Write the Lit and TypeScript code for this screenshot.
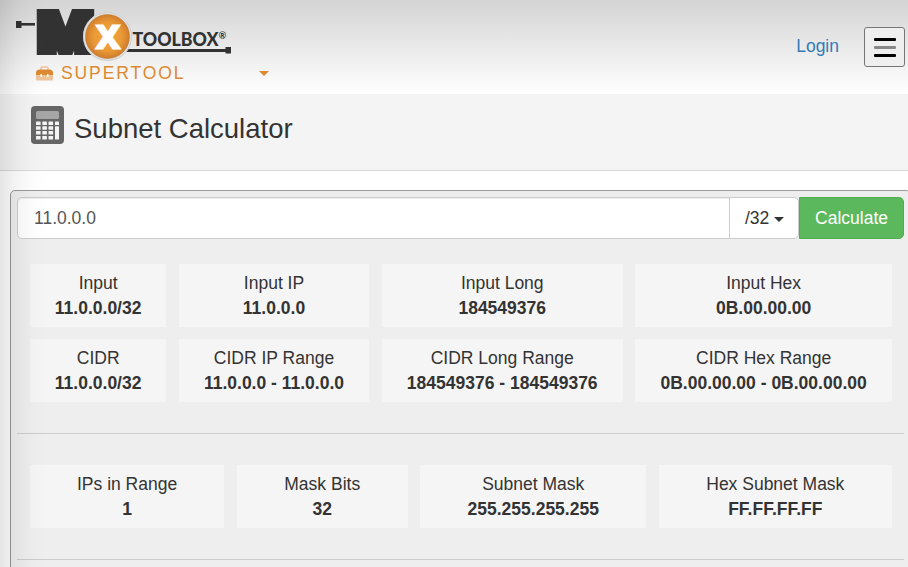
import { LitElement, html, css, svg } from "lit";
import { customElement, property } from "lit/decorators.js";

interface Fact {
  label: string;
  value: string;
}

@customElement("mx-logo")
class MxLogo extends LitElement {
  static styles = css`
    :host { display: block; width: 220px; height: 57px; }
    svg { display: block; overflow: visible; }
    .m { font: 900 54px Roboto, sans-serif; fill: #323232; stroke: #323232; stroke-width: 8px; }
    .x { font: 800 33px "Open Sans", sans-serif; fill: #fff; stroke: #fff; stroke-width: 0.8px; }
    .word { font: 900 18.5px Lato, sans-serif; fill: #323232; }
    .reg { font: 700 9px Lato, sans-serif; fill: #323232; }
  `;
  render() {
    return html`<svg width="220" height="57" viewBox="0 0 220 57">
      ${svg`
        <defs>
          <radialGradient id="disc">
            <stop offset="0" stop-color="#f5a83e" />
            <stop offset="0.65" stop-color="#ea9936" />
            <stop offset="1" stop-color="#cf7e2c" />
          </radialGradient>
        </defs>
        <rect x="0" y="17" width="5.500" height="7" fill="#323232" />
        <rect x="5" y="19" width="14" height="2.600" fill="#323232" />
        <text class="m" x="22" y="46.500" textLength="55" lengthAdjust="spacingAndGlyphs">M</text>
        <rect x="108" y="45" width="102" height="3" fill="#323232" />
        <rect x="209.500" y="43" width="5.500" height="6.500" fill="#323232" />
        <circle cx="91.500" cy="32.500" r="24.500" fill="#e3e3e3" />
        <circle cx="91.500" cy="32.500" r="24" fill="none" stroke="#c4c4c4" stroke-width="0.7" />
        <circle cx="91.500" cy="32.500" r="22" fill="url(#disc)" stroke="#bd7531" stroke-width="0.6" />
        <text class="x" x="79" y="44.500" textLength="26" lengthAdjust="spacingAndGlyphs">X</text>
        <text class="word" x="116.500" y="41.500" textLength="86" lengthAdjust="spacingAndGlyphs">TOOLBOX</text>
        <text class="reg" x="202.800" y="35">®</text>
      `}
    </svg>`;
  }
}

@customElement("site-header")
class SiteHeader extends LitElement {
  static styles = css`
    :host {
      display: flex;
      justify-content: space-between;
      box-sizing: border-box;
      height: 94px;
      padding: 4px 3px 0 16px;
      background: linear-gradient(#d4d4d4, #fff);
    }
    .tool { display: flex; align-items: center; height: 25px; margin: 0 0 0 20px; color: #dc8a31; }
    .tool-name { margin-left: 8px; font-size: 17.5px; letter-spacing: 1.9px; line-height: 25px; width: 198px; }
    .caret { border: 5px solid transparent; border-top-color: #dc8a31; border-bottom: 0; }
    .actions { display: flex; align-items: flex-start; padding-top: 23px; }
    .login { margin: 7px 25px 0 0; color: #337ab7; font-size: 17.5px; line-height: 25px; text-decoration: none; }
    .menu {
      display: flex; flex-direction: column; gap: 5px; align-items: center; justify-content: center;
      box-sizing: border-box; width: 41px; height: 40px; padding: 0;
      border: 1px solid #767676; border-radius: 3px; background: #efefef;
    }
    .bar { width: 22px; height: 3px; border-radius: 1px; background: #000; }
    .bar.mid { background: #888; }
  `;
  render() {
    return html`
      <div>
        <mx-logo></mx-logo>
        <div class="tool">
          <svg width="17" height="15" viewBox="0 0 17 15">
            <path d="M5 4V2q0-1 1-1h5q1 0 1 1v2" fill="none" stroke="#ecc39b" stroke-width="1.500" />
            <path d="M0 9.500V7q0-3.500 3.500-3.500h10Q17 3.500 17 7v2.500z" fill="#dc8a31" />
            <path d="M0 9.500h17v4q0 1-1 1H1q-1 0-1-1z" fill="#ecc39b" />
            <path d="M4.500 8h1.500v3H4.500zM11 8h1.500v3H11z" fill="#fff" />
          </svg>
          <span class="tool-name">SUPERTOOL</span>
          <span class="caret"></span>
        </div>
      </div>
      <div class="actions">
        <a class="login">Login</a>
        <button class="menu" aria-label="Menu">
          <span class="bar"></span><span class="bar mid"></span><span class="bar"></span>
        </button>
      </div>
    `;
  }
}

@customElement("fact-row")
class FactRow extends LitElement {
  @property({ attribute: false }) facts: Fact[] = [];
  @property({ attribute: false }) widths: number[] = [];
  static styles = css`
    :host { display: block; }
    .row { display: grid; gap: 12.5px; }
    .tile { box-sizing: border-box; height: 63px; padding-top: 6.5px; background: #f5f5f5; text-align: center; line-height: 25px; }
    .value { font-weight: 700; }
  `;
  render() {
    const columns = this.widths.map((w) => `${w}px`).join(" ");
    return html`<div class="row" style="grid-template-columns:${columns}">
      ${this.facts.map(
        (f) => html`<div class="tile"><div>${f.label}</div><div class="value">${f.value}</div></div>`
      )}
    </div>`;
  }
}

@customElement("app-root")
class AppRoot extends LitElement {
  static styles = css`
    :host {
      display: block; position: relative; box-sizing: border-box; height: 567px; overflow: hidden;
      background: #fff; color: #333; font: 17.5px "Liberation Sans", Arial, sans-serif;
    }
    .edge {
      position: absolute; inset: 0 auto 0 0; width: 46px; pointer-events: none;
      background: linear-gradient(90deg, rgba(0, 0, 0, 0.1), rgba(0, 0, 0, 0.045) 35%, rgba(0, 0, 0, 0.01) 70%, transparent);
    }
    .title {
      display: flex; box-sizing: border-box; height: 77px; padding: 12px 0 0 31px; gap: 10px;
      background: #f4f4f4; border-bottom: 1px solid #d9d9d9;
    }
    h1 { margin: 5px 0 0; font-size: 27.5px; line-height: 36px; font-weight: 400; }
    .panel {
      box-sizing: border-box; width: 901px; height: 420px; margin: 19px 0 0 10px; padding: 6px;
      border: 1px solid #999; border-radius: 5px; background: #eee;
    }
    .form { display: flex; height: 42px; width: 887px; }
    .form > * { box-sizing: border-box; line-height: 25px; font-family: inherit; font-size: 17.5px; }
    .address {
      width: 713px; padding: 0 16px; border: 1px solid #ccc; border-radius: 5px 0 0 5px;
      color: #555; background: #fff; box-shadow: inset 0 1px 1px rgba(0, 0, 0, 0.075); outline: 0;
    }
    .mask {
      display: flex; align-items: center; gap: 5px; width: 70px; margin-left: -1px; padding: 0 0 0 15px;
      border: 1px solid #ccc; border-radius: 0 5px 5px 0; background: #fff; color: #333;
    }
    .caret { margin-top: 2px; border: 5px solid transparent; border-top-color: #333; border-bottom: 0; }
    .go { width: 105px; padding: 0; border: 1px solid #4cae4c; border-radius: 0 5px 5px 0; background: #5cb85c; color: #fff; }
    .group { display: flex; flex-direction: column; gap: 12px; padding-left: 13px; }
    .group.first { margin-top: 25px; }
    .rule { height: 1px; width: 887px; margin: 31px 0; background: #ccc; }
  `;
  render() {
    const wide = [136.3, 190.4, 241.1, 256.7];
    return html`
      <site-header></site-header>
      <section class="title">
        <svg width="33" height="38" viewBox="0 0 33 38">
          <rect width="33" height="38" rx="4" fill="#666" />
          <rect x="5" y="5" width="23" height="8" rx="1.500" fill="#a6a6a6" />
          <g fill="#f4f4f4">
            ${[15.5, 20.3, 25.1, 29.9].map((y) =>
              [5, 11.3, 17.5].map((x) => svg`<rect x=${x} y=${y} width="4.600" height="3.500" rx="0.500" />`)
            )}
            <rect x="24" y="15.500" width="4" height="3.500" rx="0.500" />
            <rect x="24" y="20.300" width="4" height="13.100" rx="0.500" />
          </g>
        </svg>
        <h1>Subnet Calculator</h1>
      </section>
      <section class="panel">
        <div class="form">
          <input class="address" .value=${"11.0.0.0"} />
          <button class="mask">/32 <span class="caret"></span></button>
          <button class="go">Calculate</button>
        </div>
        <div class="group first">
          <fact-row .widths=${wide} .facts=${[
            { label: "Input", value: "11.0.0.0/32" },
            { label: "Input IP", value: "11.0.0.0" },
            { label: "Input Long", value: "184549376" },
            { label: "Input Hex", value: "0B.00.00.00" },
          ]}></fact-row>
          <fact-row .widths=${wide} .facts=${[
            { label: "CIDR", value: "11.0.0.0/32" },
            { label: "CIDR IP Range", value: "11.0.0.0 - 11.0.0.0" },
            { label: "CIDR Long Range", value: "184549376 - 184549376" },
            { label: "CIDR Hex Range", value: "0B.00.00.00 - 0B.00.00.00" },
          ]}></fact-row>
        </div>
        <div class="rule"></div>
        <div class="group">
          <fact-row .widths=${[194.2, 171.1, 225.9, 233.3]} .facts=${[
            { label: "IPs in Range", value: "1" },
            { label: "Mask Bits", value: "32" },
            { label: "Subnet Mask", value: "255.255.255.255" },
            { label: "Hex Subnet Mask", value: "FF.FF.FF.FF" },
          ]}></fact-row>
        </div>
        <div class="rule"></div>
      </section>
      <div class="edge"></div>
    `;
  }
}
